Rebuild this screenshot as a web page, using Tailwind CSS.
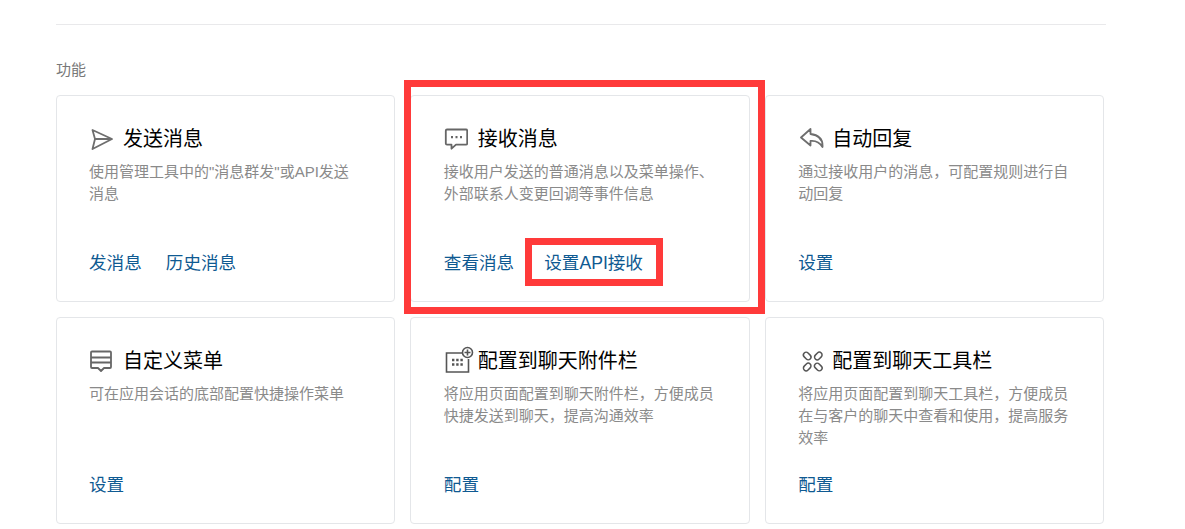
<!DOCTYPE html>
<html lang="zh-CN">
<head>
<meta charset="utf-8">
<script src="https://cdn.jsdelivr.net/npm/@tailwindcss/browser@4"></script>
</head>
<body class="bg-white overflow-hidden font-['Liberation_Sans','Noto_Sans_CJK_SC',sans-serif]">
<div class="relative w-[1185px] h-[529px] overflow-hidden">
  <div class="ml-[56px] w-[1050px] pt-[24px]">
    <div class="h-px bg-[#e9e9eb]"></div>
    <div class="mt-[35px] h-[20px] text-[15px] leading-[20px] text-[#787878]">功能</div>
    <div class="mt-[15px] w-[1048px] grid grid-cols-3 gap-[15px] grid-rows-[207px_207px]">

      <div class="flex flex-col border border-[#e4e6e9] rounded-[4px] pl-[32px] pt-[31px] pb-[25px]">
        <div class="flex items-center h-[24px]">
          <svg class="w-[24px] h-[24px] mr-[10px]" viewBox="0 0 24 24" fill="none" stroke="#6e6e6e" stroke-width="1.8" stroke-linejoin="round"><path d="M3.5 3 L23 12 L3.5 22 L6 12 Z M6 12 H23"/></svg>
          <span class="text-[20px] leading-[24px] text-black">发送消息</span>
        </div>
        <p class="mt-[10px] w-[272px] text-[15px] leading-[22px] text-[#8a8a8a]">使用管理工具中的"消息群发"或API发送消息</p>
        <div class="mt-auto flex gap-[24px] text-[17.6px] leading-[26px] text-[#0f5a92]"><span>发消息</span><span>历史消息</span></div>
      </div>

      <div class="flex flex-col border border-[#e4e6e9] rounded-[4px] pl-[32.5px] pt-[31px] pb-[25px]">
        <div class="flex items-center h-[24px]">
          <svg class="w-[24px] h-[24px] mr-[10px]" viewBox="0 0 24 24" fill="none" stroke="#666" stroke-width="1.8" stroke-linejoin="round"><path d="M3 2.5 H22 Q23.2 2.5 23.2 3.7 V16.5 Q23.2 17.7 22 17.7 H12 L7.5 21.7 V17.7 H3 Q1.8 17.7 1.8 16.5 V3.7 Q1.8 2.5 3 2.5 Z"/><path d="M7 10.2h2M11.5 10.2h2M16 10.2h2" stroke-width="2.2"/></svg>
          <span class="text-[20px] leading-[24px] text-black">接收消息</span>
        </div>
        <p class="mt-[10px] w-[272px] text-[15px] leading-[22px] text-[#8a8a8a]">接收用户发送的普通消息以及菜单操作、外部联系人变更回调等事件信息</p>
        <div class="mt-auto flex gap-[30px] text-[17.6px] leading-[26px] text-[#0f5a92]"><span>查看消息</span><span>设置API接收</span></div>
      </div>

      <div class="flex flex-col border border-[#e4e6e9] rounded-[4px] pl-[32.5px] pt-[31px] pb-[25px]">
        <div class="flex items-center h-[24px]">
          <svg class="w-[26px] h-[24px] mr-[8px]" viewBox="0 0 26 24" fill="none" stroke="#6e6e6e" stroke-width="1.8" stroke-linejoin="round"><path d="M12.5 2 L3 10.5 L12.5 18.5 V14 C18 13.5 21.5 15 24.5 20 C25 12.5 21 8 12.5 7 Z"/></svg>
          <span class="text-[20px] leading-[24px] text-black">自动回复</span>
        </div>
        <p class="mt-[10px] w-[272px] text-[15px] leading-[22px] text-[#8a8a8a]">通过接收用户的消息，可配置规则进行自动回复</p>
        <div class="mt-auto flex gap-[24px] text-[17.6px] leading-[26px] text-[#0f5a92]"><span>设置</span></div>
      </div>

      <div class="flex flex-col border border-[#e4e6e9] rounded-[4px] pl-[32px] pt-[31px] pb-[25px]">
        <div class="flex items-center h-[24px]">
          <svg class="w-[24px] h-[24px] mr-[10px]" viewBox="0 0 24 24" fill="none" stroke="#666" stroke-width="1.8" stroke-linejoin="round"><path d="M3 2.5 H21 Q22 2.5 22 3.5 V18 Q22 19 21 19 H15 L12 22 L9 19 H3 Q2 19 2 18 V3.5 Q2 2.5 3 2.5 Z M2 8.5 H22 M2 13.5 H22"/></svg>
          <span class="text-[20px] leading-[24px] text-black">自定义菜单</span>
        </div>
        <p class="mt-[10px] w-[272px] text-[15px] leading-[22px] text-[#8a8a8a]">可在应用会话的底部配置快捷操作菜单</p>
        <div class="mt-auto flex gap-[24px] text-[17.6px] leading-[26px] text-[#0f5a92]"><span>设置</span></div>
      </div>

      <div class="flex flex-col border border-[#e4e6e9] rounded-[4px] pl-[32.5px] pt-[31px] pb-[25px]">
        <div class="flex items-center h-[24px]">
          <svg class="w-[32px] h-[28px] mr-[2px] shrink-0 -mt-[2px]" viewBox="0 0 32 28" fill="none" stroke="#555" stroke-width="1.6"><path d="M18.5 7 H2.5 V26 H24.5 V13"/><path d="M8 14h2.4M12.2 14h2.4M16.4 14h2.4M8 18.5h2.4M12.2 18.5h2.4M16.4 18.5h2.4" stroke-width="2.4"/><circle cx="23.5" cy="6.5" r="5"/><path d="M23.5 3.5v6M20.5 6.5h6"/></svg>
          <span class="text-[20px] leading-[24px] text-black">配置到聊天附件栏</span>
        </div>
        <p class="mt-[10px] w-[272px] text-[15px] leading-[22px] text-[#8a8a8a]">将应用页面配置到聊天附件栏，方便成员快捷发送到聊天，提高沟通效率</p>
        <div class="mt-auto flex gap-[24px] text-[17.6px] leading-[26px] text-[#0f5a92]"><span>配置</span></div>
      </div>

      <div class="flex flex-col border border-[#e4e6e9] rounded-[4px] pl-[32.5px] pt-[31px] pb-[25px]">
        <div class="flex items-center h-[24px]">
          <svg class="w-[26px] h-[24px] mr-[8px]" viewBox="0 0 26 24" fill="none" stroke="#555" stroke-width="1.5"><rect x="-2.7" y="-4.2" width="5.4" height="8.4" rx="2.7" transform="translate(9.2 7) rotate(-45)"/><rect x="-2.7" y="-4.2" width="5.4" height="8.4" rx="2.7" transform="translate(20.3 7) rotate(45)"/><rect x="-2.7" y="-4.2" width="5.4" height="8.4" rx="2.7" transform="translate(9.2 18) rotate(45)"/><rect x="-2.7" y="-4.2" width="5.4" height="8.4" rx="2.7" transform="translate(20.3 18) rotate(-45)"/></svg>
          <span class="text-[20px] leading-[24px] text-black">配置到聊天工具栏</span>
        </div>
        <p class="mt-[10px] w-[272px] text-[15px] leading-[22px] text-[#8a8a8a]">将应用页面配置到聊天工具栏，方便成员在与客户的聊天中查看和使用，提高服务效率</p>
        <div class="mt-auto flex gap-[24px] text-[17.6px] leading-[26px] text-[#0f5a92]"><span>配置</span></div>
      </div>
    </div>
  </div>
  <div class="absolute left-[404px] top-[80px] w-[361px] h-[234px] border-[7px] border-[#ff3a3a]"></div>
  <div class="absolute left-[525px] top-[238px] w-[138px] h-[48px] border-[7px] border-[#ff3a3a]"></div>
</div>
</body>
</html>
